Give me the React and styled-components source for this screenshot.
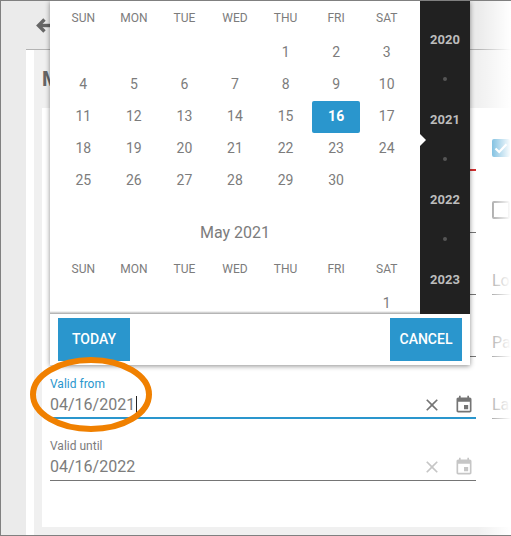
import styled, { createGlobalStyle } from "styled-components";

const GlobalStyle = createGlobalStyle`
  body {
    margin: 0;
    background: #fff;
    font-family: Roboto, "Liberation Sans", sans-serif;
  }
`;

const Frame = styled.div`
  position: relative;
  width: 511px;
  height: 536px;
  box-sizing: border-box;
  display: flex;
  flex-direction: column;
  overflow: hidden;
  background: #ebebeb;
  border: 1px solid #808080;
  border-right: none;
`;

const TopBar = styled.div`
  flex: none;
  height: 48px;
  display: flex;
  align-items: center;
  padding-left: 35px;
  svg {
    display: block;
    fill: none;
    stroke: #666;
    stroke-width: 3.4;
  }
`;

const Body = styled.div`
  flex: 1;
  min-height: 0;
  margin-left: 25px;
  padding-left: 8px;
  background: #fff;
  border-top: 1px solid #b3b3b3;
`;

const Content = styled.div`
  height: 100%;
  box-sizing: border-box;
  display: flex;
  flex-direction: column;
  padding-bottom: 8px;
  background: #f0f0f0;
`;

const Heading = styled.h2`
  flex: none;
  height: 58px;
  margin: 0;
  padding: 18px 0 0 8px;
  box-sizing: border-box;
  color: #666;
  font-size: 20px;
  font-weight: 700;
  line-height: 23px;
`;

const Card = styled.div`
  flex: 1;
  margin-left: 8px;
  padding: 1px 0 0 8px;
  background: #fff;
  display: grid;
  grid-template-columns: 426px 200px;
  column-gap: 16px;
  align-content: start;
`;

const Column = styled.div`
  display: flex;
  flex-direction: column;
`;

const Field = styled.div`
  height: 62px;
  box-sizing: border-box;
  display: flex;
  flex-direction: column;
  justify-content: flex-end;
  padding-bottom: ${(p) => (p.$width === 2 ? 1 : 2)}px;
  border-bottom: ${(p) => p.$width || 1}px solid ${(p) => p.$line || "#757575"};
`;

const CheckRow = styled.div`
  height: 62px;
  box-sizing: border-box;
  padding-top: 30px;
`;

const Box = styled.div`
  width: 18px;
  height: 18px;
  box-sizing: border-box;
  border-radius: 2px;
  background: ${(p) => (p.$checked ? "#2a96cd" : "#fff")};
  border: 2px solid ${(p) => (p.$checked ? "#2a96cd" : "#757575")};
  display: flex;
  align-items: center;
  justify-content: center;
`;

const Label = styled.label`
  height: 14px;
  margin-bottom: 3px;
  color: ${(p) => p.$color || "#7c7c7c"};
  font-size: 12px;
  line-height: 14px;
`;

const ValueRow = styled.div`
  height: 22px;
  display: flex;
  align-items: center;
  color: #7c7c7c;
  font-size: 16px;
  line-height: 22px;
`;

const Value = styled.span`
  flex: 1;
  display: flex;
  align-items: center;
`;

const Caret = styled.span`
  width: 1px;
  height: 18px;
  margin-left: 1px;
  background: #222;
`;

const Placeholder = styled.span`
  color: #808080;
`;

const IconSlot = styled.span`
  width: 24px;
  height: 20px;
  display: flex;
  justify-content: center;
  margin-left: 8px;
  svg {
    display: block;
    fill: ${(p) => (p.$dim ? "#c6c6c6" : "#757575")};
  }
`;

const Fade = styled.div`
  position: absolute;
  top: -1px;
  bottom: -1px;
  right: 0;
  width: 33px;
  z-index: 1;
  background: linear-gradient(to right, rgba(255, 255, 255, 0), #fff);
`;

const Popover = styled.div`
  position: absolute;
  left: 49px;
  top: 0;
  z-index: 2;
  width: 420px;
  background: #fff;
  box-shadow: 0 1px 5px rgba(0, 0, 0, 0.45);
`;

const PickerMain = styled.div`
  height: 313px;
  display: flex;
`;

const Months = styled.div`
  position: relative;
  width: 370px;
  overflow: hidden;
  padding: 0 8px;
  box-sizing: border-box;
  &::after {
    content: "";
    position: absolute;
    left: 0;
    right: 0;
    bottom: 0;
    height: 3px;
    background: linear-gradient(to bottom, rgba(0, 0, 0, 0), rgba(0, 0, 0, 0.35));
  }
`;

const MonthTitle = styled.div`
  height: 55px;
  box-sizing: border-box;
  padding-top: 24px;
  color: #7c7c7c;
  font-size: 16px;
  line-height: 24px;
  text-align: center;
`;

const Weekdays = styled.div`
  height: 36px;
  display: grid;
  grid-template-columns: repeat(7, 1fr);
  color: #7c7c7c;
  font-size: 12px;
  line-height: 34px;
  text-align: center;
`;

const Days = styled.div`
  display: grid;
  grid-template-columns: repeat(7, 1fr);
  grid-auto-rows: 32px;
`;

const Day = styled.div`
  grid-column-start: ${(p) => p.$start || "auto"};
  margin: 0 1px;
  padding-bottom: 2px;
  box-sizing: border-box;
  display: flex;
  align-items: center;
  justify-content: center;
  border-radius: 2px;
  font-size: 14px;
  font-weight: ${(p) => (p.$selected ? 700 : 400)};
  color: ${(p) => (p.$selected ? "#fff" : "#7c7c7c")};
  background: ${(p) => (p.$selected ? "#2a96cd" : "transparent")};
`;

const Years = styled.div`
  position: relative;
  width: 50px;
  padding-top: 18px;
  box-sizing: border-box;
  background: #212121;
  overflow: hidden;
`;

const YearItem = styled.div`
  height: 40px;
  display: flex;
  align-items: center;
  justify-content: center;
  color: #bdbdbd;
  font-size: 13px;
  font-weight: 700;
`;

const Dot = styled.span`
  width: 4px;
  height: 4px;
  border-radius: 50%;
  background: #555;
`;

const Pointer = styled.div`
  position: absolute;
  left: 0;
  top: 133px;
  border-top: 6px solid transparent;
  border-bottom: 6px solid transparent;
  border-left: 6px solid #fff;
`;

const PickerFooter = styled.div`
  height: 51px;
  box-sizing: border-box;
  padding: 4px 8px;
  display: flex;
  justify-content: space-between;
`;

const ActionButton = styled.button`
  width: 72px;
  height: 43px;
  padding: 0 0 2px;
  border: none;
  background: #2a96cd;
  color: #fff;
  font-family: inherit;
  font-size: 14px;
  font-weight: 500;
`;

const Highlight = styled.svg`
  position: absolute;
  left: -1px;
  top: -1px;
  z-index: 3;
  pointer-events: none;
`;

const closePath =
  "M19 6.41 17.59 5 12 10.59 6.41 5 5 6.41 10.59 12 5 17.59 6.41 19 12 13.41 17.59 19 19 17.59 13.41 12z";
const eventPath =
  "M17 12h-5v5h5v-5zM16 1v2H8V1H6v2H5c-1.11 0-1.99.9-1.99 2L3 19c0 1.1.89 2 2 2h14c1.1 0 2-.9 2-2V5c0-1.1-.9-2-2-2h-1V1h-2zm3 18H5V8h14v11z";

const WEEKDAYS = ["Sun", "Mon", "Tue", "Wed", "Thu", "Fri", "Sat"];
const range = (n) => Array.from({ length: n }, (_, i) => i + 1);

const WeekHeader = () => (
  <Weekdays>
    {WEEKDAYS.map((d) => (
      <span key={d}>{d.toUpperCase()}</span>
    ))}
  </Weekdays>
);

const FieldIcons = ({ dim }) => (
  <>
    <IconSlot $dim={dim}>
      <svg width="20" height="20" viewBox="0 0 24 24">
        <path d={closePath} />
      </svg>
    </IconSlot>
    <IconSlot $dim={dim}>
      <svg width="20" height="20" viewBox="0 0 24 24">
        <path d={eventPath} />
      </svg>
    </IconSlot>
  </>
);

const App = () => {
  return (
    <Frame>
      <GlobalStyle />
      <TopBar>
        <svg width="15" height="15" viewBox="0 0 15 15">
          <path d="M15 7.5H3" />
          <path d="M8.5 1.5 2.5 7.5 8.5 13.5" />
        </svg>
      </TopBar>
      <Body>
        <Content>
          <Heading>Main</Heading>
          <Card>
            <Column>
              <Field $line="#d32f2f" $width={2} />
              <Field />
              <Field />
              <Field />
              <Field $line="#2a96cd" $width={2}>
                <Label $color="#2a96cd">Valid from</Label>
                <ValueRow>
                  <Value>
                    04/16/2021
                    <Caret />
                  </Value>
                  <FieldIcons />
                </ValueRow>
              </Field>
              <Field>
                <Label>Valid until</Label>
                <ValueRow>
                  <Value>04/16/2022</Value>
                  <FieldIcons dim />
                </ValueRow>
              </Field>
            </Column>
            <Column>
              <CheckRow>
                <Box $checked>
                  <svg width="14" height="14" viewBox="0 0 14 14">
                    <path d="M1.5 7.5 5.2 11 12.5 3.2" fill="none" stroke="#fff" strokeWidth="2.2" />
                  </svg>
                </Box>
              </CheckRow>
              <CheckRow>
                <Box />
              </CheckRow>
              {["Login", "Password", "Label"].map((name) => (
                <Field key={name}>
                  <ValueRow>
                    <Placeholder>{name}</Placeholder>
                  </ValueRow>
                </Field>
              ))}
            </Column>
          </Card>
        </Content>
      </Body>

      <Fade />

      <Popover>
        <PickerMain>
          <Months>
            <WeekHeader />
            <Days>
              {range(30).map((d) => (
                <Day key={d} $start={d === 1 ? 5 : undefined} $selected={d === 16}>
                  {d}
                </Day>
              ))}
            </Days>
            <MonthTitle>May 2021</MonthTitle>
            <WeekHeader />
            <Days>
              <Day $start={7}>1</Day>
            </Days>
          </Months>
          <Years>
            <YearItem>2020</YearItem>
            <YearItem><Dot /></YearItem>
            <YearItem>2021</YearItem>
            <YearItem><Dot /></YearItem>
            <YearItem>2022</YearItem>
            <YearItem><Dot /></YearItem>
            <YearItem>2023</YearItem>
            <Pointer />
          </Years>
        </PickerMain>
        <PickerFooter>
          <ActionButton>TODAY</ActionButton>
          <ActionButton>CANCEL</ActionButton>
        </PickerFooter>
      </Popover>

      <Highlight width="511" height="536" viewBox="0 0 511 536">
        <ellipse cx="91" cy="394.5" rx="58" ry="34.5" fill="none" stroke="#f08000" strokeWidth="6" />
      </Highlight>
    </Frame>
  );
};

export default App;
